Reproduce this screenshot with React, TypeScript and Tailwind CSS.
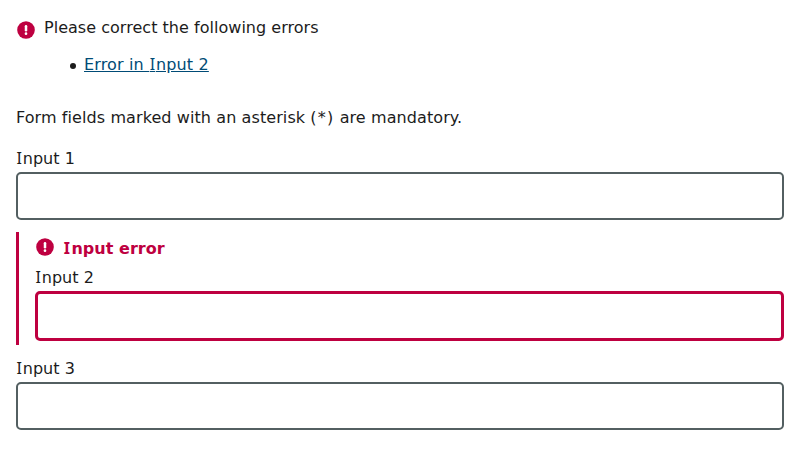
function Alert({ className }: { className: string }) {
  return (
    <svg className={className} viewBox="0 0 18 18" aria-hidden="true">
      <circle cx="9" cy="9" r="8.8" fill="#be0040" />
      <path d="M9 5.2v4" stroke="#fff" strokeWidth="2.5" strokeLinecap="round" />
      <circle cx="9" cy="12.7" r="1.35" fill="#fff" />
    </svg>
  );
}

function SerifI({ bold = false }: { bold?: boolean }) {
  return (
    <span className={bold ? "pr-[1.4px] pl-[0.8px] font-['Noto_Sans',sans-serif] leading-none" : "pr-[0.7px] pl-[0.6px] font-['Noto_Sans',sans-serif] leading-none"}>I</span>
  );
}

export default function App() {
  return (
    <main className="h-[450px] w-[800px] bg-white px-4 pt-4 font-['DejaVu_Sans',Verdana,sans-serif] text-base leading-6 tracking-[0.03px] text-[#1c1c1c]">
      <section className="flex gap-[9px] pl-px">
        <Alert className="mt-[5px] size-[18px] shrink-0" />
        <div>
          <p>Please correct the following errors</p>
          <ul className="mt-[13px] pl-[26px]">
            <li className="flex items-center gap-[8px]">
              <span className="mt-px size-[6px] rounded-full bg-[#1c1c1c]" />
              <a href="#input2" className="tracking-[0.15px] text-[#004b76] underline">Error in <SerifI />nput 2</a>
            </li>
          </ul>
        </div>
      </section>
      <p className="mt-[29px] tracking-[0.09px]">Form fields marked with an asterisk <span className="tracking-[1.2px]">(*)</span> are mandatory.</p>
      <label htmlFor="input1" className="mt-[17px] block"><SerifI />nput 1</label>
      <input id="input1" className="mt-px block h-12 w-full rounded-[5px] border-2 border-[#535f61]" />
      <section className="mt-3 h-[113px] border-l-[3px] border-[#be0040] pl-4 pt-[5px]">
        <div className="flex items-start gap-[9px] pl-px text-[#be0040]">
          <Alert className="mt-px size-[18px]" />
          <strong><SerifI bold />nput error</strong>
        </div>
        <label htmlFor="input2" className="mt-[5px] block"><SerifI />nput 2</label>
        <input id="input2" className="mt-px block h-[50px] w-full rounded-[5px] border-[3px] border-[#be0040]" />
      </section>
      <label htmlFor="input3" className="mt-3 block"><SerifI />nput 3</label>
      <input id="input3" className="mt-px block h-12 w-full rounded-[5px] border-2 border-[#535f61]" />
    </main>
  );
}
